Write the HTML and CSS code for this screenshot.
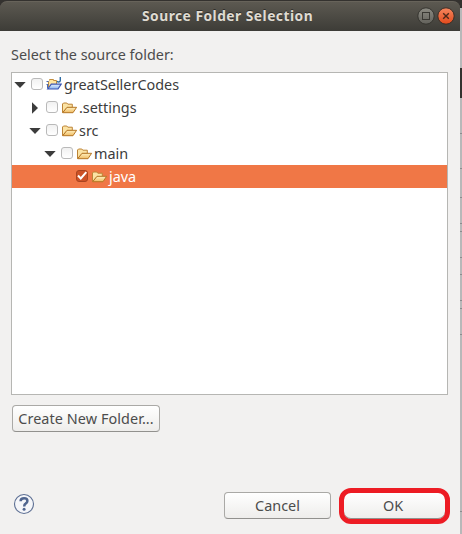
FILE: index.html
```html
<!DOCTYPE html>
<html lang="en">
<head>
<meta charset="utf-8">
<title>Source Folder Selection</title>
<link rel="stylesheet" href="styles.css">
</head>
<body>
<svg class="defs" width="0" height="0" aria-hidden="true">
  <defs>
    <linearGradient id="gold" x1="0" y1="0" x2="0" y2="1"><stop offset="0" stop-color="#fff0c0"/><stop offset="1" stop-color="#efbb62"/></linearGradient>
    <linearGradient id="blue" x1="0" y1="0" x2="0" y2="1"><stop offset="0" stop-color="#e4f1ff"/><stop offset="1" stop-color="#86b2ef"/></linearGradient>
    <symbol id="folder" viewBox="0 0 16 16">
      <path d="M1.5 12.5V4L2.5 3H5.8L6.8 4.2H11.3V7.5H6.3L1.5 12.5Z" fill="#fbe3a4" stroke="#bd8436"/>
      <path d="M1.7 12.7L6 7.3H15.6L12 12.7Z" fill="url(#gold)" stroke="#b57624"/>
    </symbol>
    <symbol id="project" viewBox="0 0 16 16">
      <path d="M2.5 10V4.5H1.5M3.5 3.5V2.5H7.5V3.5H10.5V7" fill="#ffe6a0" stroke="#c28c3c"/>
      <path d="M3 4H10V7.5H5L3 10Z" fill="#ffe6a0"/>
      <path d="M.5 4.5H2.5M.5 7.5H2.5M1.5 8V11.5" stroke="#4869b4"/>
      <path d="M1.7 12L5.3 7.2H15.2L12 12Z" fill="url(#blue)" stroke="#3b55b2" stroke-width="1.2"/>
      <path d="M14.3 0V3.5Q14.3 5 12.7 5Q11.5 5 11.2 4" fill="none" stroke="#2e6ca4" stroke-width="1.4"/>
    </symbol>
  </defs>
</svg>
<div class="screen">
  <div class="dialog">
    <header class="titlebar">
      <h1><span>Source Folder Selection</span></h1>
      <div class="controls">
        <svg width="18" height="18" viewBox="0 0 18 18"><defs><linearGradient id="gb" x1="0" y1="0" x2="0" y2="1"><stop offset="0" stop-color="#8b8a82"/><stop offset="1" stop-color="#62615b"/></linearGradient></defs><circle cx="9" cy="9" r="8.2" fill="url(#gb)" stroke="#35342f"/><rect x="5.5" y="5.5" width="7" height="7" fill="none" stroke="#393833"/></svg>
        <svg width="18" height="18" viewBox="0 0 18 18"><defs><linearGradient id="rb" x1="0" y1="0" x2="0" y2="1"><stop offset="0" stop-color="#f5875f"/><stop offset="1" stop-color="#e2491b"/></linearGradient></defs><circle cx="9" cy="9" r="8.2" fill="url(#rb)" stroke="#3a2d26"/><path d="M6.2 6.2L11.8 11.8M11.8 6.2L6.2 11.8" stroke="#4c2819" stroke-width="1.4"/></svg>
      </div>
    </header>
    <main class="content">
      <p class="label"><span>Select the source folder:</span></p>
      <div class="tree">
        <div class="row l0"><svg class="arrow" viewBox="0 0 12 12"><path d="M.3 3H11.7L6 9Z"/></svg><i class="check"></i><svg class="icon"><use href="#project"/></svg><span>greatSellerCodes</span></div>
        <div class="row l1"><svg class="arrow" viewBox="0 0 12 12"><path d="M3 .3V11.7L9 6Z"/></svg><i class="check"></i><svg class="icon"><use href="#folder"/></svg><span>.settings</span></div>
        <div class="row l1"><svg class="arrow" viewBox="0 0 12 12"><path d="M.3 3H11.7L6 9Z"/></svg><i class="check"></i><svg class="icon"><use href="#folder"/></svg><span>src</span></div>
        <div class="row l2"><svg class="arrow" viewBox="0 0 12 12"><path d="M.3 3H11.7L6 9Z"/></svg><i class="check"></i><svg class="icon"><use href="#folder"/></svg><span>main</span></div>
        <div class="row l3 selected"><span class="arrow"></span><i class="check on"><svg width="12" height="12" viewBox="0 0 12 12"><path d="M2 5.5L4.8 8.5L10.3 2.2" fill="none" stroke="#fff" stroke-width="2"/></svg></i><svg class="icon"><use href="#folder"/></svg><span>java</span></div>
      </div>
      <button class="btn create"><span>Create New Folder...</span></button>
      <footer class="footer">
        <svg class="help" width="22" height="22" viewBox="0 0 22 22"><circle cx="11" cy="11" r="9.5" fill="#f5f6f9" stroke="#5d6f93" stroke-width="1.1"/><path d="M7.6 8.2Q7.6 5.3 11.1 5.3Q14.4 5.3 14.4 8Q14.4 9.5 12.6 10.6Q11.2 11.4 11.2 13.4" fill="none" stroke="#50658f" stroke-width="2.5"/><circle cx="11.1" cy="16.2" r="1.5" fill="#50658f"/></svg>
        <button class="btn cancel"><span>Cancel</span></button>
        <button class="btn ok"><span>OK</span></button>
      </footer>
    </main>
  </div>
  <svg class="edge" width="2" height="534" viewBox="0 0 2 534"><path fill="#b8b8b9" d="M0 0H2V534H0Z"/><path fill="#34322f" d="M0 0H2V8H0ZM0 68H2V98H0Z"/><path stroke="#8b8c8e" d="M0 133.5H2M0 168.5H2M0 197.5H2M0 223.5H2M0 231.5H2M0 257.5H2M0 274.5H2M0 300.5H2M0 308.5H2M0 334.5H2M0 511.5H2"/></svg>
</div>
</body>
</html>
```

FILE: styles.css
```css
* { box-sizing: border-box; }
body { margin: 0; overflow: hidden; background: #34322f; color: #4c4c4c; font: 14.4px/23px "Noto Sans", "Open Sans", sans-serif; }
.defs { position: absolute; }
.screen { display: flex; width: 462px; height: 534px; }
.dialog { width: 460px; height: 534px; display: flex; flex-direction: column; }
.edge { flex: none; display: block; }
span { white-space: nowrap; }

.titlebar { height: 30px; margin-top: 1px; padding-right: 5px; display: grid; grid-template-columns: 142px 1fr auto; align-items: center; background: linear-gradient(#5c5951, #3d3c37); border-top: 1px solid #67635a; border-radius: 7px 7px 0 0; }
h1 { grid-column: 2; margin: 0; font-size: 13.8px; line-height: 26px; letter-spacing: .48px; padding-bottom: 2px; font-weight: 700; color: #dfdbd2; text-shadow: 0 -1px #302f2b; }
.controls { display: flex; gap: 2px; padding-bottom: 1px; }
.controls svg { display: block; }

.content { flex: 1; background: #f2f1f0; padding: 13px 12px 0 11px; }
.label { margin: 0; height: 28px; line-height: 22px; }
.tree { height: 323px; background: #fff; border: 1px solid #b6b6b3; color: #3c3c3c; }
.row { height: 23px; display: flex; align-items: center; }
.l0 { padding-left: 2px; }
.l1 { padding-left: 17px; }
.l2 { padding-left: 32px; }
.l3 { padding-left: 47px; }
.selected { background: #f07746; color: #fff; }
.arrow { width: 12px; height: 12px; flex: none; fill: #3c3c3c; }
.check { width: 12px; height: 12px; flex: none; margin: 0 3px 2px 5px; border: 1px solid #b9b9b9; border-radius: 3px; background: linear-gradient(#f1f1f1, #fff); }
.check.on { border-color: #a9441f; background: #cc5126; }
.check svg { display: block; margin: -1px; }
.icon { width: 16px; height: 16px; flex: none; margin-right: 2px; }

.btn { display: flex; justify-content: center; align-items: center; height: 27px; padding: 0; border: 1px solid #aaa9a6; border-bottom-color: #92918e; border-radius: 4px; background: linear-gradient(#fff, #eeedeb); color: #4c4c4c; font: inherit; }
.create { width: 148px; margin: 10px 0 0 1px; letter-spacing: .08px; }
.footer { display: flex; align-items: center; margin-top: 55px; height: 36px; }
.help { margin: 0 auto 3px 2px; }
.cancel { width: 107px; margin-right: 8px; }
.ok { width: 111px; height: 36px; margin: 1px -2px -1px 0; padding: 0 3px 2px 0; border: 5px solid #ed1c24; border-radius: 12px; box-shadow: inset 0 -1px #92918e; }
```
